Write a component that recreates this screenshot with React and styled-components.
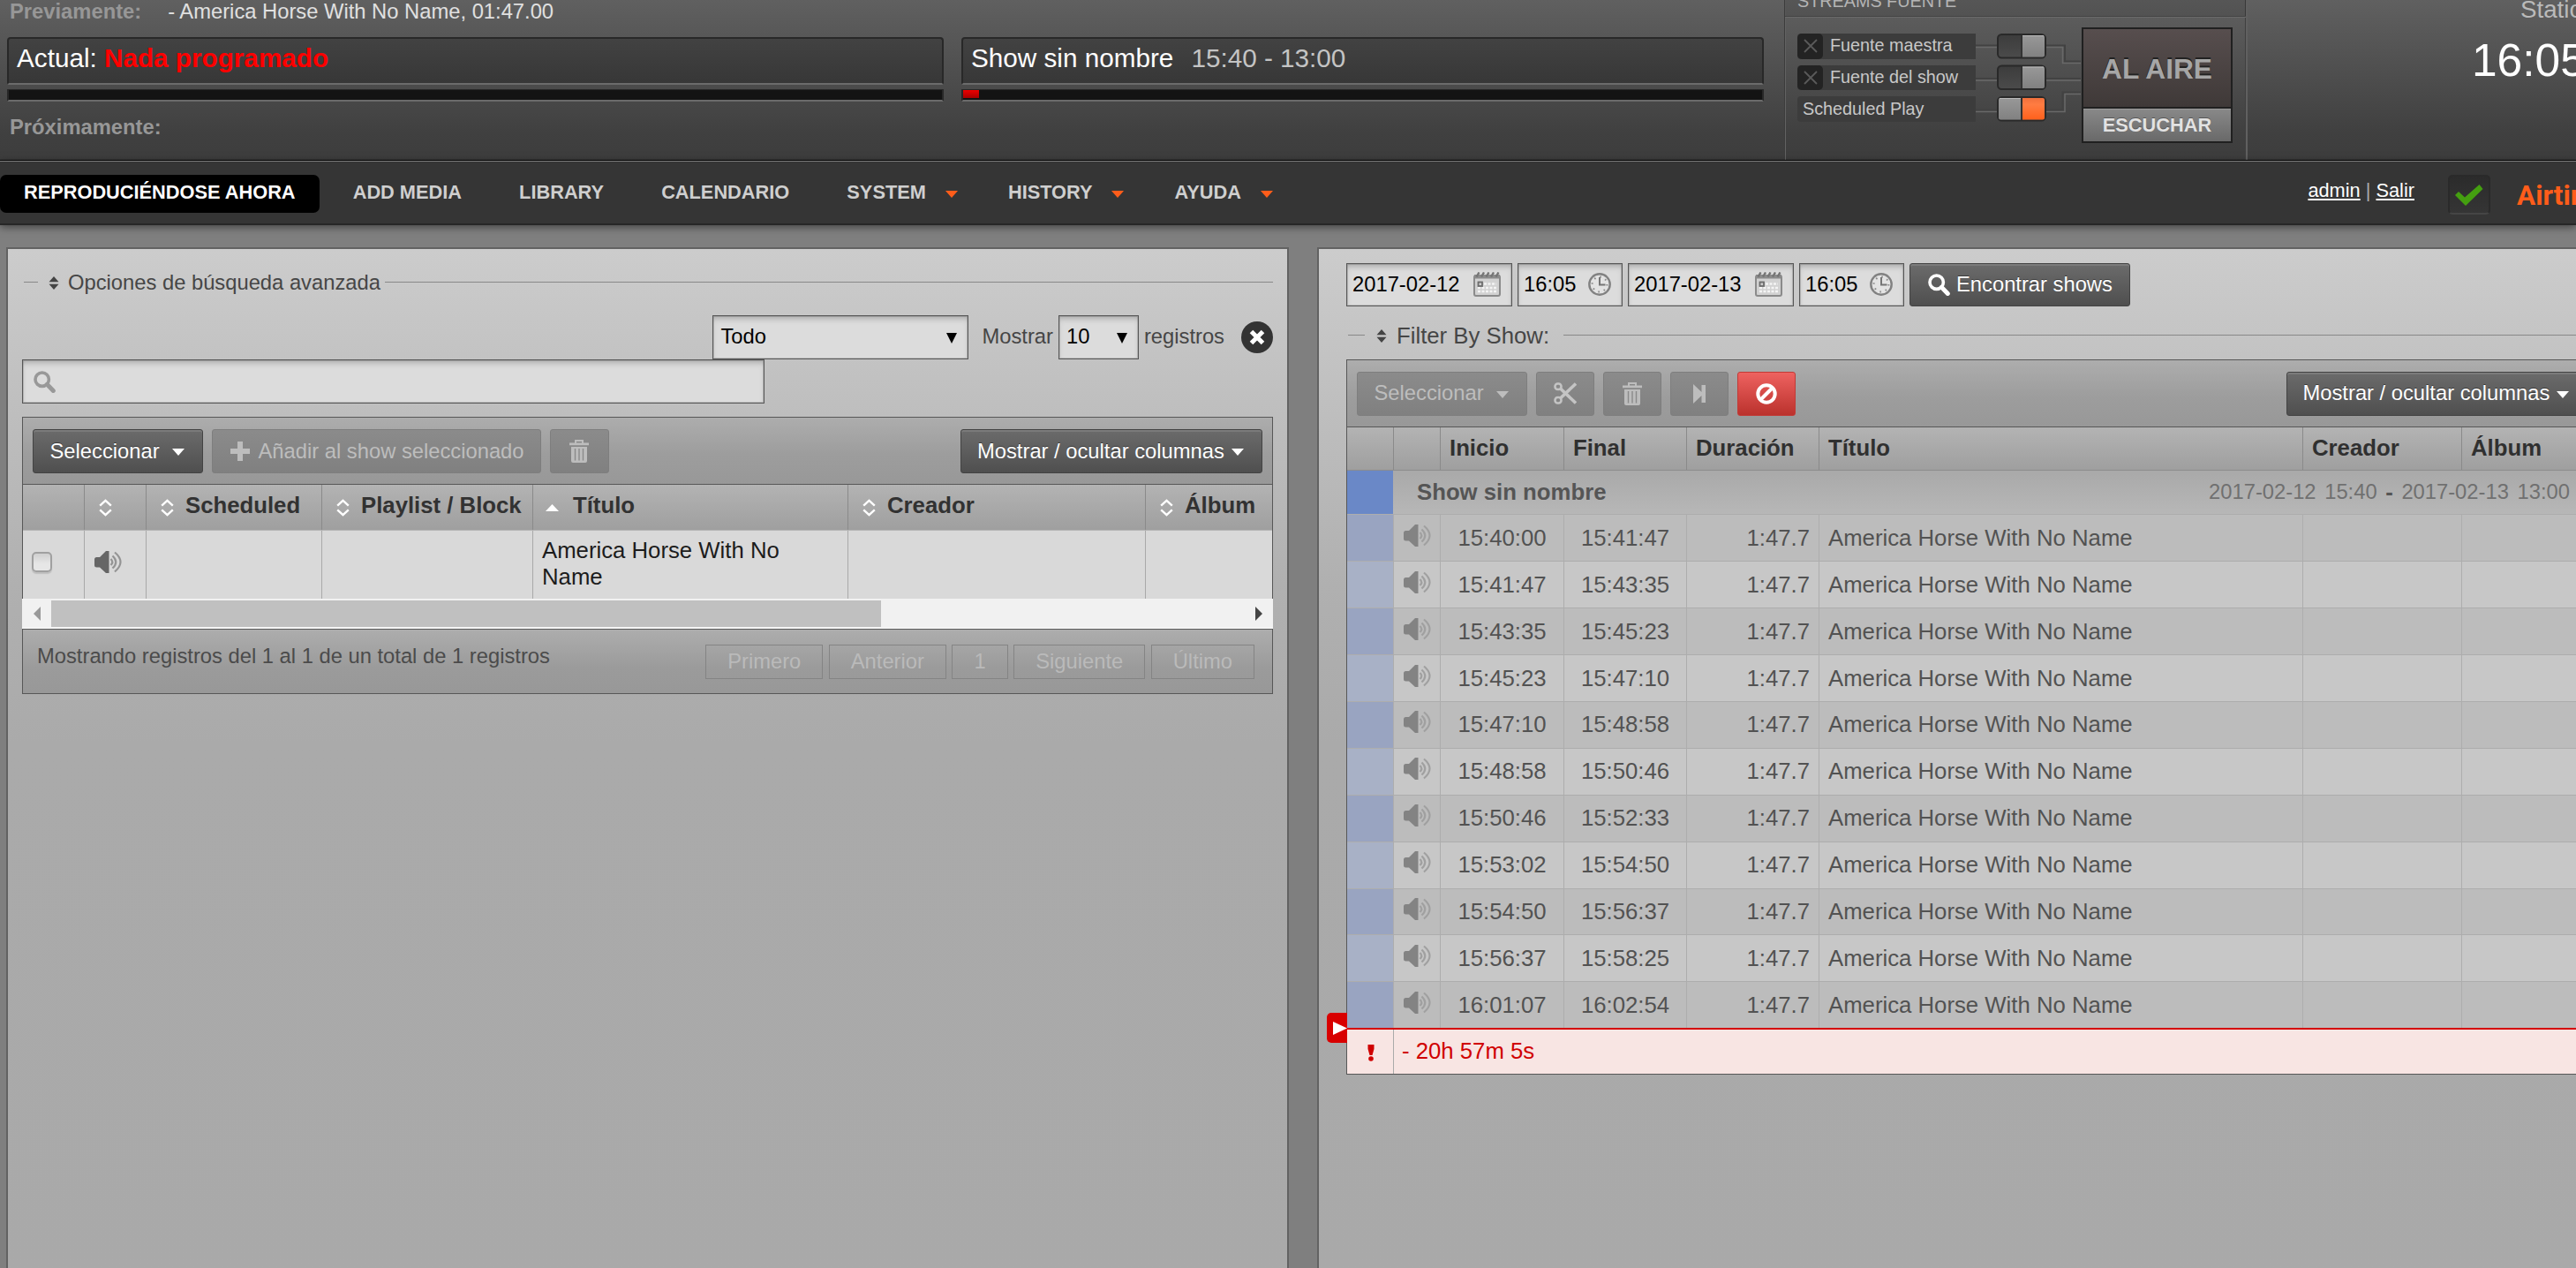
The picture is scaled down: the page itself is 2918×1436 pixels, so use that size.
import React from "react";
import styled, { createGlobalStyle, css } from "styled-components";

const GlobalStyle = createGlobalStyle`
  *, *::before, *::after { box-sizing: border-box; }
  html, body { margin: 0; padding: 0; background: #7f7f7f; overflow: hidden; }
  body, button { font-family: "Liberation Sans", Arial, Helvetica, sans-serif; }
  button { margin: 0; }
`;

const Page = styled.div`
  display: flex;
  flex-direction: column;
  width: 100%;
  height: 1436px;
  overflow: hidden;
  font-size: 23.76px;
  white-space: nowrap;
  background: #7f7f7f;
`;

/* ---------- master panel ---------- */

const MasterPanel = styled.header`
  display: flex;
  flex: none;
  height: 182px;
  border-bottom: 1px solid #000;
  background: linear-gradient(#606060, #404040 150px, #3d3d3d);
`;

const NowPlaying = styled.section`
  display: flex;
  flex: none;
  flex-direction: column;
  width: 2021px;
  padding: 0 23px 0 8px;
`;

const TrackLine = styled.div`
  display: flex;
  gap: 30px;
  height: 26px;
  line-height: 26px;
  padding-left: 3px;
  color: #e0e0e0;
  margin-top: ${(p) => p.$top || 0}px;
`;

const TrackLabel = styled.strong`
  color: #979797;
`;

const NowRow = styled.div`
  display: grid;
  grid-template-columns: 1061px 909px;
  gap: 20px;
  margin-top: 16px;
`;

const NowBox = styled.div`
  height: 54px;
  border: 2px solid #282828;
  border-bottom: 2px solid #6b6b6b;
  border-radius: 4px 4px 2px 2px;
  background: linear-gradient(#424242, #373737);
  padding: 5px 0 0 9px;
  font-size: 29.7px;
  line-height: 34px;
  color: #fff;
`;

const Nothing = styled.strong`
  color: #f00;
`;

const ShowTime = styled.span`
  margin-left: 20px;
  color: #c4c4c4;
`;

const Progress = styled.div`
  height: 14px;
  margin-top: 5px;
  border: 2px solid #282828;
  border-top-width: 1px;
  border-bottom: 2px solid #6b6b6b;
  background: #131313;
  border-radius: 1px;
`;

const ProgressFill = styled.div`
  height: 9px;
  background: linear-gradient(#ee0000, #a80000);
`;

const Streams = styled.section`
  display: flex;
  flex: none;
  flex-direction: column;
  width: 525px;
  border-left: 1px solid #3c3c3c;
  border-right: 2px solid #606060;
  box-shadow: inset 1px 0 0 #626262, inset -1px 0 0 #404040;
`;

const StreamsTitle = styled.div`
  height: 19px;
  border-bottom: 1px solid #434343;
  box-shadow: 0 1px 0 #6a6a6a;
  background: rgba(0, 0, 0, 0.1);
  padding-left: 14px;
  font-size: 19.8px;
  line-height: 3px;
  color: #b4b4b4;
`;

const StreamsBody = styled.div`
  display: grid;
  grid-template-columns: 202px 120px 171px;
  padding: 12px 0 0 14px;
`;

const SourceList = styled.div`
  display: flex;
  flex-direction: column;
  gap: 7px;
  padding-top: 7px;
`;

const Source = styled.div`
  display: flex;
  align-items: center;
  height: 28.6px;
  border-radius: 4px 0 0 4px;
  background: #3c3c3c;
  color: #c8c8c8;
  font-size: 19.8px;
  line-height: 24px;
  padding: ${(p) => (p.$plain ? "0 0 1px 6px" : "0")};
`;

const SourceLabel = styled.span`
  padding: 0 0 2px 8px;
`;

const Kick = styled.span`
  display: grid;
  place-items: center;
  width: 29px;
  height: 28.6px;
  border-radius: 5px;
  background: #232323;
`;

const OnAirColumn = styled.div`
  display: flex;
  flex-direction: column;
  height: 131px;
  border: 2px solid #202020;
`;

const OnAir = styled.div`
  display: flex;
  align-items: center;
  justify-content: center;
  height: 90px;
  border-bottom: 2px solid #202020;
  background: linear-gradient(#574e4e, #3f3938);
  font-size: 31.68px;
  font-weight: bold;
  color: #a6a6a6;
  text-shadow: 0 -2px 0 #222;
  padding-top: 3px;
`;

const Listen = styled.button`
  flex: 1;
  border: 0;
  border-top: 1px solid #9a9a9a;
  background: linear-gradient(#888, #696969);
  font-size: 21.78px;
  font-weight: bold;
  line-height: 24px;
  color: #e2e2e2;
  text-shadow: 0 -1px 0 #555;
  padding: 0;
`;

const StationClock = styled.section`
  display: flex;
  flex: none;
  flex-direction: column;
  padding-left: 254px;
  color: #fff;
`;

const StationLabel = styled.span`
  font-size: 27.72px;
  line-height: 22px;
  color: #bababa;
  padding-left: 55px;
`;

const StationTime = styled.span`
  margin-top: 18px;
  font-size: 51.48px;
  line-height: 57px;
`;

/* ---------- menu ---------- */

const MenuBar = styled.nav`
  display: flex;
  flex: none;
  align-items: flex-start;
  height: 73px;
  padding-top: 15px;
  border-top: 1px solid #7d7d7d;
  border-bottom: 2px solid #272727;
  background: #353535;
  box-shadow: 0 2px 9px rgba(0, 0, 0, 0.5);
  z-index: 1;
`;

const MenuItem = styled.a`
  display: flex;
  align-items: center;
  height: 43px;
  margin-right: 11.1px;
  padding: 0 ${(p) => (p.$sub ? 19 : 27)}px 3px 27px;
  border-radius: 7px;
  background: ${(p) => (p.$active ? "#000" : "transparent")};
  color: ${(p) => (p.$active ? "#fff" : "#cfcfcf")};
  font-size: 21.78px;
  font-weight: bold;
`;

const MenuCaret = styled.span`
  margin: 3px 0 0 22px;
  border: 7.5px solid transparent;
  border-top: 8px solid #ff5d1a;
  border-bottom: 0;
`;

const Account = styled.div`
  margin-left: auto;
  padding-top: 5px;
  font-size: 21.78px;
  line-height: 26px;
  color: #aaa;
`;

const AccountLink = styled.a`
  color: #fff;
  text-decoration: underline;
  text-decoration-thickness: 2px;
  text-underline-offset: 2px;
`;

const StatusBadge = styled.span`
  display: grid;
  place-items: center;
  width: 48px;
  height: 45px;
  margin-left: 38px;
  border: 2px solid #2a2a2a;
  border-bottom-color: #454545;
  border-radius: 5px;
  background: linear-gradient(#2b2b2b, #353535);
`;

const Logo = styled.span`
  width: 67px;
  margin-left: 30px;
  padding-top: 5px;
  overflow: hidden;
  font-family: Roboto, "Liberation Sans", sans-serif;
  font-size: 31.5px;
  font-weight: 700;
  line-height: 38px;
  color: #ff5d1a;
`;

/* ---------- panels ---------- */

const Workspace = styled.main`
  display: flex;
  flex: none;
  gap: 32px;
  height: 1200px;
  padding: 25px 0 0 7px;
`;

const Panel = styled.section`
  flex: none;
  width: ${(p) => p.$width}px;
  border: 2px solid #626262;
  background: linear-gradient(#cccccc, #c3c3c3 120px, #b0b0b0 380px, #aaaaaa 560px, #a9a9a9);
  padding: ${(p) => p.$pad};
`;

const Legend = styled.div`
  display: flex;
  align-items: center;
  height: 30px;
  font-size: ${(p) => p.$size || 23.76}px;
  line-height: 30px;
  color: #464646;
  margin-top: ${(p) => p.$top || 0}px;
  padding-left: 2px;
`;

const Rule = styled.span`
  height: 1px;
  background: #888;
  flex: ${(p) => (p.$width ? "none" : 1)};
  width: ${(p) => (p.$width ? p.$width + "px" : "auto")};
  margin-left: ${(p) => p.$left || 0}px;
  margin-bottom: 1px;
`;

const LegendIcon = styled.svg`
  margin: 0 ${(p) => p.$right}px 0 ${(p) => p.$left}px;
`;

const field = css`
  border: 1px solid #565656;
  outline: 1px solid rgba(90, 90, 90, 0.25);
  outline-offset: -2px;
  background: #dcdcdc;
  box-shadow: inset 0 5px 6px -2px #aaa;
  color: #000;
`;

const FilterRow = styled.div`
  display: flex;
  align-items: center;
  justify-content: flex-end;
  height: 50px;
  margin-top: 22px;
  color: #464646;
`;

const Select = styled.div`
  ${field}
  display: flex;
  align-items: center;
  justify-content: space-between;
  width: ${(p) => p.$width}px;
  height: 50px;
  margin-right: ${(p) => p.$right}px;
  padding: 0 12px 3px 8px;
`;

const SelectArrow = styled.span`
  margin-top: 4px;
  border: 6.5px solid transparent;
  border-top: 12px solid #000;
  border-bottom: 0;
`;

const FilterLabel = styled.span`
  margin-right: ${(p) => p.$right}px;
  padding-bottom: 3px;
`;

const SearchBox = styled.div`
  ${field}
  display: flex;
  align-items: center;
  width: 841px;
  height: 50px;
  padding-left: 12px;
`;

const Grid = styled.div`
  position: relative;
  border: 1px solid #575757;
  border-right-width: ${(p) => (p.$open ? 0 : 1)}px;
  margin-top: ${(p) => p.$top}px;
`;

const Toolbar = styled.div`
  display: flex;
  align-items: flex-start;
  height: ${(p) => p.$height}px;
  padding: ${(p) => p.$pad} 11px 0 10.5px;
  gap: 10px;
  background: linear-gradient(#adadad, #9d9d9d 55%, #989898);
`;

const Spacer = styled.span`
  flex: 1;
`;

const buttonTones = {
  dark: css`
    border-color: #434343;
    background: linear-gradient(#6b6b6b, #4f4f4f);
    box-shadow: inset 0 2px 0 #7b7b7b;
    color: #fff;
    text-shadow: 0 -1px 0 #3a3a3a;
  `,
  disabled: css`
    border-color: #7e7e7e;
    background: linear-gradient(#8b8b8b, #808080);
    color: #bdbdbd;
  `,
  red: css`
    border-color: #c23a36;
    background: linear-gradient(#ee6260, #bb322d);
    color: #fff;
  `,
};

const Button = styled.button`
  display: flex;
  flex: none;
  align-items: center;
  justify-content: ${(p) => (p.$icon ? "center" : "flex-start")};
  width: ${(p) => p.$width}px;
  height: ${(p) => p.$height || 50}px;
  margin-left: ${(p) => p.$left || 0}px;
  padding: ${(p) => (p.$icon ? "0" : `0 0 1px ${p.$inset || 19}px`)};
  border: 1px solid;
  border-radius: 3px;
  font-size: 23.76px;
  line-height: 28px;
  ${(p) => buttonTones[p.$tone]}
`;

const Caret = styled.span`
  margin: 3px 0 0 ${(p) => p.$left}px;
  border: 7.5px solid transparent;
  border-top: 8px solid currentColor;
  border-bottom: 0;
`;

const ButtonText = styled.span`
  margin-left: ${(p) => p.$left || 0}px;
`;

/* ---------- library table ---------- */

const LibraryRow = styled.div`
  display: grid;
  grid-template-columns: 70px 70px 199px 239px 357px 337px 1fr;
`;

const LibraryHead = styled(LibraryRow)`
  height: 53px;
  border-top: 1px solid #575757;
  border-bottom: 1px solid #b4b4b4;
  background: linear-gradient(#b3b3b3, #9f9f9f);
  font-size: 25.74px;
  font-weight: bold;
  color: #323232;
`;

const LibraryHeadCell = styled.div`
  display: flex;
  align-items: center;
  overflow: hidden;
  border-right: 1px solid #8a8a8a;
  padding: 0 0 4px ${(p) => (p.$asc ? 14 : 16)}px;
  gap: ${(p) => (p.$asc ? 16 : 13)}px;

  &:last-child { border-right: 0; }

  svg { flex: none; margin-top: 4px; }
`;

const LibraryBody = styled(LibraryRow)`
  height: 77px;
  background: #d9d9d9;
  font-size: 25.74px;
  line-height: 29.7px;
  color: #1c1c1c;
`;

const LibraryCell = styled.div`
  display: flex;
  align-items: center;
  white-space: normal;
  border-right: 1px solid #a9a9a9;
  padding: 0 ${(p) => (p.$wide ? 60 : 0)}px ${(p) => (p.$icon ? 6 : 1)}px ${(p) => (p.$icon ? 11 : 10)}px;

  &:last-child { border-right: 0; }
`;

const Checkbox = styled.span`
  width: 23px;
  height: 23px;
  margin-left: -1px;
  border: 2px solid #a0a0a0;
  border-radius: 5px;
  background: linear-gradient(#cfcfcf, #e6e6e6 60%);
  box-shadow: 0 2px 1px rgba(0, 0, 0, 0.12);
`;

const Scrollbar = styled.div`
  display: flex;
  align-items: center;
  height: 34px;
  margin: 0 -1px;
  background: #f1f1f1;
  border-bottom: 1px solid #fff;
`;

const ScrollArrow = styled.span`
  width: 33px;
  display: grid;
  place-items: center;
`;

const ScrollThumb = styled.span`
  width: 940px;
  height: 30px;
  margin-right: auto;
  background: #c0c0c0;
`;

const Footer = styled.div`
  display: flex;
  justify-content: space-between;
  height: 73px;
  border-top: 1px solid #575757;
  background: linear-gradient(#adadad, #9b9b9b 60%, #989898);
  padding: 17px 20px 0 16px;
  color: #4b4b4b;
`;

const FooterInfo = styled.span`
  line-height: 26px;
`;

const Pager = styled.div`
  display: flex;
  gap: 6.5px;
`;

const PageButton = styled.button`
  height: 39px;
  padding: 0 24px 2px;
  border: 1px solid #848484;
  background: transparent;
  color: #bababa;
  font-size: 23.76px;
  line-height: 28px;
`;

/* ---------- schedule ---------- */

const DateRow = styled.div`
  display: flex;
  height: 49px;
`;

const DateField = styled.div`
  ${field}
  display: flex;
  align-items: center;
  justify-content: space-between;
  width: ${(p) => p.$width}px;
  margin-right: 6px;
  padding: 0 12px 1px 6px;
`;

const ScheduleRow = styled.div`
  display: grid;
  grid-template-columns: 53px 53px 140px 139px 150px 548px 180px 1fr;
  height: ${(p) => p.$height}px;
`;

const ScheduleHead = styled(ScheduleRow)`
  border-top: 1px solid #575757;
  border-bottom: 1px solid #8c8c8c;
  background: linear-gradient(#b3b3b3, #9f9f9f);
  font-size: 25.74px;
  font-weight: bold;
  line-height: 47px;
  color: #303030;
`;

const HeadCell = styled.div`
  padding-left: 10px;
  border-right: 1px solid #8a8a8a;
`;

const ShowHeader = styled.div`
  display: grid;
  grid-template-columns: 52px 1fr;
  height: 49.4px;
`;

const ShowColor = styled.div`
  background: #6a88c7;
`;

const ShowTitle = styled.div`
  display: flex;
  align-items: center;
  gap: 9.6px;
  padding: 0 0 1px 27px;
  background: linear-gradient(#a9a9a9, #b7b7b7);
  font-size: 25.74px;
  color: #555;
`;

const ShowDate = styled.span`
  font-size: 23.76px;
  color: #707070;
  margin-left: ${(p) => p.$left || 0}px;
`;

const TrackRow = styled(ScheduleRow)`
  border-top: 1px solid #adadad;
  background: ${(p) => (p.$even ? "#c7c7c7" : "#bcbcbc")};
  font-size: 25.74px;
  color: #525252;
`;

const TrackCell = styled.div`
  display: flex;
  align-items: center;
  justify-content: ${(p) => p.$align || "flex-start"};
  border-right: 1px solid #adadad;
  padding: 0 10px 0;
  background: ${(p) => p.$bg || "transparent"};

  svg { flex: none; margin-bottom: 6px; }
`;

const GapRow = styled.div`
  display: grid;
  grid-template-columns: 53px 1fr;
  height: 52px;
  border-top: 2px solid #d40000;
  background: #f8e5e3;
  font-size: 25.74px;
  color: #d00000;
`;

const GapCell = styled.div`
  display: flex;
  align-items: center;
  justify-content: ${(p) => (p.$mark ? "center" : "flex-start")};
  padding: ${(p) => (p.$mark ? "2px 0 0 2px" : "0 0 1px 9px")};
  border-right: 1px solid #aaa;
`;

const NowMarker = styled.div`
  position: absolute;
  left: -23px;
  bottom: 35px;
  display: flex;
  align-items: center;
  justify-content: flex-end;
  width: 23px;
  height: 34px;
  border-radius: 5px 0 0 5px;
  background: #d80000;
`;

/* ---------- icons ---------- */

const SortDark = ({ left, right }) => (
  <LegendIcon $left={left} $right={right} width="12" height="15" viewBox="0 0 12 15" fill="#444">
    <path d="M6 0l5.5 6.3H.5zM6 15L.5 8.7h11z" />
  </LegendIcon>
);

const SortBoth = () => (
  <svg width="15" height="20" viewBox="0 0 15 20" fill="none" stroke="#fff" strokeWidth="2.4">
    <path d="M1.2 7.6L7.5 1.8l6.3 5.8M1.2 12.4l6.3 5.8 6.3-5.8" />
  </svg>
);

const SortAsc = () => (
  <svg width="15" height="8" viewBox="0 0 15 8" fill="#fff">
    <path d="M7.5 0L15 8H0z" />
  </svg>
);

const Speaker = ({ color, wave }) => (
  <svg width="31" height="25" viewBox="0 0 31 25">
    <path d="M0 9.5Q0 7 2.5 7H6L13 0h3.5v25H13L6 18.5H2.5Q0 18.5 0 16z" fill={color} />
    <g fill="none" stroke={wave} strokeWidth="2.2">
      <path d="M18.500 9q3.500 3.500 0 7" />
      <path d="M20.500 5.500q7.500 7 0 14" />
      <path d="M23 1.500q13 11 0 22" />
    </g>
  </svg>
);

const Magnifier = ({ color }) => (
  <svg width="25" height="25" viewBox="0 0 25 25" fill="none" stroke={color} strokeWidth="3.600">
    <circle cx="9.700" cy="9.700" r="7.700" />
    <path d="M15.300 15.300l7 7.200" strokeWidth="5" strokeLinecap="round" />
  </svg>
);

const Trash = () => (
  <svg width="22" height="26" viewBox="0 0 22 26" fill="#bdbdbd">
    <path d="M6 0h10v3.500h6V6.300H0V3.500h6zM8 2v1.500h6V2zM2 8h18v16q0 2-2 2H4q-2 0-2-2z" fillRule="evenodd" />
    <path d="M6.500 10v13.500M11 10v13.500M15.500 10v13.500" stroke="#8a8a8a" strokeWidth="1.400" />
  </svg>
);

const Plus = () => (
  <svg width="22" height="22" viewBox="0 0 22 22" fill="#bdbdbd">
    <path d="M8 0h6v8h8v6h-8v8H8v-8H0V8h8z" />
  </svg>
);

const Scissors = () => (
  <svg width="26" height="25" viewBox="0 0 26 25" fill="none" stroke="#c4c4c4" strokeWidth="2.600">
    <rect x="1.500" y="1.500" width="7" height="6.500" rx="3" />
    <rect x="1.500" y="17" width="7" height="6.500" rx="3" />
    <path d="M7.500 7L25 23.500M7.500 18L25 1.500" strokeWidth="3.600" />
  </svg>
);

const SkipNext = () => (
  <svg width="14" height="22" viewBox="0 0 14 22" fill="#bdbdbd">
    <path d="M0 0l9.500 9V1H14v20H9.500v-8L0 22z" />
  </svg>
);

const Ban = () => (
  <svg width="24" height="24" viewBox="0 0 24 24" fill="none" stroke="#fff" strokeWidth="4">
    <circle cx="12" cy="12" r="9.700" />
    <path d="M18.500 5.500l-13 13" />
  </svg>
);

const Calendar = () => (
  <svg width="31" height="28" viewBox="0 0 31 28">
    <rect x="1" y="4" width="29" height="23" rx="2" fill="#d2d2d2" stroke="#8b8b8b" strokeWidth="2" />
    <path d="M1 3h29v4.500H1z" fill="#8b8b8b" />
    <path d="M3.500 5.500l3-5M9 5.500l3-5M14.500 5.500l3-5M20 5.500l3-5M25.500 5.500l3-5" stroke="#757575" strokeWidth="2.400" />
    <path d="M5 18h21M5 22h21M12 13.500h14" stroke="#f4f4f4" strokeWidth="2.600" strokeDasharray="3 1.500" />
    <rect x="5.500" y="11.500" width="4.500" height="4.500" fill="#ccc" stroke="#6c6c6c" strokeWidth="1.800" />
  </svg>
);

const ClockIcon = () => (
  <svg width="26" height="26" viewBox="0 0 26 26" fill="none">
    <circle cx="13" cy="13" r="11.700" fill="#e3e3e3" stroke="#828282" strokeWidth="2.400" />
    <circle cx="13" cy="13" r="8.400" stroke="#8b8b8b" strokeWidth="2" strokeDasharray="1.600 5" />
    <path d="M13 5v8.500h6.500" stroke="#757575" strokeWidth="2" />
  </svg>
);

const CloseRound = () => (
  <svg width="36" height="36" viewBox="0 0 36 36">
    <circle cx="18" cy="18" r="18" fill="#333" />
    <path d="M11.500 11.500l13 13M24.500 11.500l-13 13" stroke="#fff" strokeWidth="5" />
  </svg>
);

const KickIcon = () => (
  <svg width="16" height="16" viewBox="0 0 16 16" stroke="#5a5a5a" strokeWidth="1.800">
    <path d="M1 1l14 14M15 1L1 15" />
  </svg>
);

const Check = () => (
  <svg width="32" height="24" viewBox="0 0 32 24" fill="#449f10">
    <path d="M0 12l4-4 7 6.500L27.500 0l4 5L12 24z" />
  </svg>
);

const Wiring = () => (
  <svg width="120" height="118" viewBox="0 0 120 118" fill="none">
    <defs>
      <linearGradient id="knob" x1="0" y1="0" x2="0" y2="1">
        <stop offset="0" stopColor="#989898" />
        <stop offset="1" stopColor="#818181" />
      </linearGradient>
      <linearGradient id="well" x1="0" y1="0" x2="0" y2="1">
        <stop offset="0" stopColor="#3c3c3c" />
        <stop offset="1" stopColor="#4b4b4b" />
      </linearGradient>
      <linearGradient id="lit" x1="0" y1="0" x2="0" y2="1">
        <stop offset="0" stopColor="#f0703c" />
        <stop offset="0.300" stopColor="#ff7c42" />
        <stop offset="1" stopColor="#ff611c" />
      </linearGradient>
    </defs>
    <g stroke="#424242" strokeWidth="2">
      <path d="M0 20.500h101v18h18M0 58h119M0 93.500h98.500v-20h20.500" />
    </g>
    <g stroke="#696969" strokeWidth="1.500">
      <path d="M0 22.500h98.500v18h20.500M0 60h119M0 95.500h101v-20h18" />
    </g>
    {[7, 42.5, 78].map((y, i) => {
      const on = i === 2;
      return (
        <g key={y} transform={`translate(24 ${y})`}>
          <rect x="1" y="1" width="54" height="26.500" rx="4.500" fill="url(#well)" stroke="#292929" strokeWidth="2" />
          <path d={on ? "M2 4q0-2 2-2h23v24.500H4q-2 0-2-2z" : "M29 2h23q2 0 2 2v20.500q0 2-2 2H29z"} fill="url(#knob)" />
          <path d={on ? "M3 2.500h24" : "M29 2.500h24"} stroke="#b9b9b9" />
          {on && <path d="M29 2h23q2 0 2 2v20.500q0 2-2 2H29z" fill="url(#lit)" />}
          <path d="M28 1v26" stroke="#2c2c2c" strokeWidth="1.500" />
        </g>
      );
    })}
  </svg>
);

/* ---------- data ---------- */

const menu = [
  { label: "REPRODUCIÉNDOSE AHORA", active: true },
  { label: "ADD MEDIA" },
  { label: "LIBRARY" },
  { label: "CALENDARIO" },
  { label: "SYSTEM", sub: true },
  { label: "HISTORY", sub: true },
  { label: "AYUDA", sub: true },
];

const tracks = [
  ["15:40:00", "15:41:47"],
  ["15:41:47", "15:43:35"],
  ["15:43:35", "15:45:23"],
  ["15:45:23", "15:47:10"],
  ["15:47:10", "15:48:58"],
  ["15:48:58", "15:50:46"],
  ["15:50:46", "15:52:33"],
  ["15:53:02", "15:54:50"],
  ["15:54:50", "15:56:37"],
  ["15:56:37", "15:58:25"],
  ["16:01:07", "16:02:54"],
];

const libraryColumns = ["", "Scheduled", "Playlist / Block", "Título", "Creador", "Álbum"];

const Header = () => (
  <MasterPanel>
    <NowPlaying>
      <TrackLine>
        <TrackLabel>Previamente:</TrackLabel>
        <span>- America Horse With No Name, 01:47.00</span>
      </TrackLine>
      <NowRow>
        <div>
          <NowBox>
            Actual: <Nothing>Nada programado</Nothing>
          </NowBox>
          <Progress />
        </div>
        <div>
          <NowBox>
            Show sin nombre<ShowTime>15:40 - 13:00</ShowTime>
          </NowBox>
          <Progress>
            <ProgressFill style={{ width: "2%" }} />
          </Progress>
        </div>
      </NowRow>
      <TrackLine $top={16}>
        <TrackLabel>Próximamente:</TrackLabel>
      </TrackLine>
    </NowPlaying>
    <Streams>
      <StreamsTitle>STREAMS FUENTE</StreamsTitle>
      <StreamsBody>
        <SourceList>
          {["Fuente maestra", "Fuente del show"].map((label) => (
            <Source key={label}>
              <Kick>
                <KickIcon />
              </Kick>
              <SourceLabel>{label}</SourceLabel>
            </Source>
          ))}
          <Source $plain>Scheduled Play</Source>
        </SourceList>
        <Wiring />
        <OnAirColumn>
          <OnAir>AL AIRE</OnAir>
          <Listen>ESCUCHAR</Listen>
        </OnAirColumn>
      </StreamsBody>
    </Streams>
    <StationClock>
      <StationLabel>Station time</StationLabel>
      <StationTime>16:05</StationTime>
    </StationClock>
  </MasterPanel>
);

const Menu = () => (
  <MenuBar>
    {menu.map((item) => (
      <MenuItem key={item.label} $active={item.active} $sub={item.sub}>
        {item.label}
        {item.sub && <MenuCaret />}
      </MenuItem>
    ))}
    <Account>
      <AccountLink>admin</AccountLink> | <AccountLink>Salir</AccountLink>
    </Account>
    <StatusBadge>
      <Check />
    </StatusBadge>
    <Logo>Airtime</Logo>
  </MenuBar>
);

const Library = () => (
  <Panel $width={1453} $pad="23px 16px 0 16px">
    <Legend>
      <Rule $width={16} />
      <SortDark left={12} right={10} />
      Opciones de búsqueda avanzada
      <Rule $left={5} />
    </Legend>
    <FilterRow>
      <Select $width={290} $right={15}>
        Todo
        <SelectArrow />
      </Select>
      <FilterLabel $right={6}>Mostrar</FilterLabel>
      <Select $width={91} $right={6}>
        10
        <SelectArrow />
      </Select>
      <FilterLabel $right={19}>registros</FilterLabel>
      <CloseRound />
    </FilterRow>
    <SearchBox>
      <Magnifier color="#989898" />
    </SearchBox>
    <Grid $top={15}>
      <Toolbar $height={75} $pad="13px">
        <Button $tone="dark" $width={193}>
          Seleccionar
          <Caret $left={14} />
        </Button>
        <Button $tone="disabled" $width={373} $inset={20}>
          <Plus />
          <ButtonText $left={10}>Añadir al show seleccionado</ButtonText>
        </Button>
        <Button $tone="disabled" $width={67} $icon>
          <Trash />
        </Button>
        <Spacer />
        <Button $tone="dark" $width={342} $inset={18}>
          Mostrar / ocultar columnas
          <Caret $left={8} />
        </Button>
      </Toolbar>
      <LibraryHead>
        <LibraryHeadCell />
        {libraryColumns.map((name) => (
          <LibraryHeadCell key={name} $asc={name === "Título"}>
            {name === "Título" ? <SortAsc /> : <SortBoth />}
            {name}
          </LibraryHeadCell>
        ))}
      </LibraryHead>
      <LibraryBody>
        <LibraryCell $icon>
          <Checkbox />
        </LibraryCell>
        <LibraryCell $icon>
          <Speaker color="#666" wave="#949494" />
        </LibraryCell>
        <LibraryCell />
        <LibraryCell />
        <LibraryCell $wide>America Horse With No Name</LibraryCell>
        <LibraryCell />
        <LibraryCell />
      </LibraryBody>
      <Scrollbar>
        <ScrollArrow>
          <svg width="8" height="16" viewBox="0 0 8 16" fill="#999">
            <path d="M8 0v16L0 8z" />
          </svg>
        </ScrollArrow>
        <ScrollThumb />
        <ScrollArrow>
          <svg width="8" height="16" viewBox="0 0 8 16" fill="#444">
            <path d="M0 0v16l8-8z" />
          </svg>
        </ScrollArrow>
      </Scrollbar>
      <Footer>
        <FooterInfo>Mostrando registros del 1 al 1 de un total de 1 registros</FooterInfo>
        <Pager>
          {["Primero", "Anterior", "1", "Siguiente", "Último"].map((label) => (
            <PageButton key={label}>{label}</PageButton>
          ))}
        </Pager>
      </Footer>
    </Grid>
  </Panel>
);

const Schedule = () => (
  <Panel $width={1490} $pad="16px 0 0 31px">
    <DateRow>
      <DateField $width={188}>
        2017-02-12
        <Calendar />
      </DateField>
      <DateField $width={119}>
        16:05
        <ClockIcon />
      </DateField>
      <DateField $width={188}>
        2017-02-13
        <Calendar />
      </DateField>
      <DateField $width={119}>
        16:05
        <ClockIcon />
      </DateField>
      <Button $tone="dark" $width={250} $height={49} $inset={20}>
        <Magnifier color="#fff" />
        <ButtonText $left={7}>Encontrar shows</ButtonText>
      </Button>
    </DateRow>
    <Legend $size={25.74} $top={18}>
      <Rule $width={19} />
      <SortDark left={13} right={11} />
      Filter By Show:
      <Rule $left={16} />
    </Legend>
    <Grid $top={12} $open>
      <Toolbar $height={75} $pad="12.5px">
        <Button $tone="disabled" $width={193}>
          Seleccionar
          <Caret $left={14} />
        </Button>
        <Button $tone="disabled" $width={66} $icon>
          <Scissors />
        </Button>
        <Button $tone="disabled" $width={66} $icon>
          <Trash />
        </Button>
        <Button $tone="disabled" $width={66} $icon>
          <SkipNext />
        </Button>
        <Button $tone="red" $width={66} $icon>
          <Ban />
        </Button>
        <Button $tone="dark" $width={342} $inset={18} $left={546}>
          Mostrar / ocultar columnas
          <Caret $left={8} />
        </Button>
      </Toolbar>
      <ScheduleHead $height={50}>
        {["", "", "Inicio", "Final", "Duración", "Título", "Creador", "Álbum"].map((name, i) => (
          <HeadCell key={i}>{name}</HeadCell>
        ))}
      </ScheduleHead>
      <ShowHeader>
        <ShowColor />
        <ShowTitle>
          <strong>Show sin nombre</strong>
          <ShowDate $left={673}>2017-02-12</ShowDate>
          <ShowDate>15:40</ShowDate>
          <strong>-</strong>
          <ShowDate>2017-02-13</ShowDate>
          <ShowDate>13:00</ShowDate>
        </ShowTitle>
      </ShowHeader>
      {tracks.map(([start, end], i) => (
        <TrackRow key={start} $height={52.9} $even={i % 2 === 1}>
          <TrackCell $bg={i % 2 ? "#a8b1c6" : "#99a4c1"} />
          <TrackCell $align="center">
            <Speaker color="#838383" wave="#a0a0a0" />
          </TrackCell>
          <TrackCell $align="center">{start}</TrackCell>
          <TrackCell $align="center">{end}</TrackCell>
          <TrackCell $align="flex-end">1:47.7</TrackCell>
          <TrackCell>America Horse With No Name</TrackCell>
          <TrackCell />
          <TrackCell />
        </TrackRow>
      ))}
      <GapRow>
        <GapCell $mark>
          <svg width="8" height="19" viewBox="0 0 8 19" fill="#d00000">
            <path d="M.5 0h7v5L5.500 12h-3L.5 5z" />
            <circle cx="4" cy="16" r="2.800" />
          </svg>
        </GapCell>
        <GapCell>- 20h 57m 5s</GapCell>
      </GapRow>
      <NowMarker>
        <svg width="16" height="15" viewBox="0 0 16 15" fill="#fff">
          <path d="M0 0l16 7.500L0 15z" />
        </svg>
      </NowMarker>
    </Grid>
  </Panel>
);

export default function App() {
  return (
    <Page>
      <GlobalStyle />
      <Header />
      <Menu />
      <Workspace>
        <Library />
        <Schedule />
      </Workspace>
    </Page>
  );
}
